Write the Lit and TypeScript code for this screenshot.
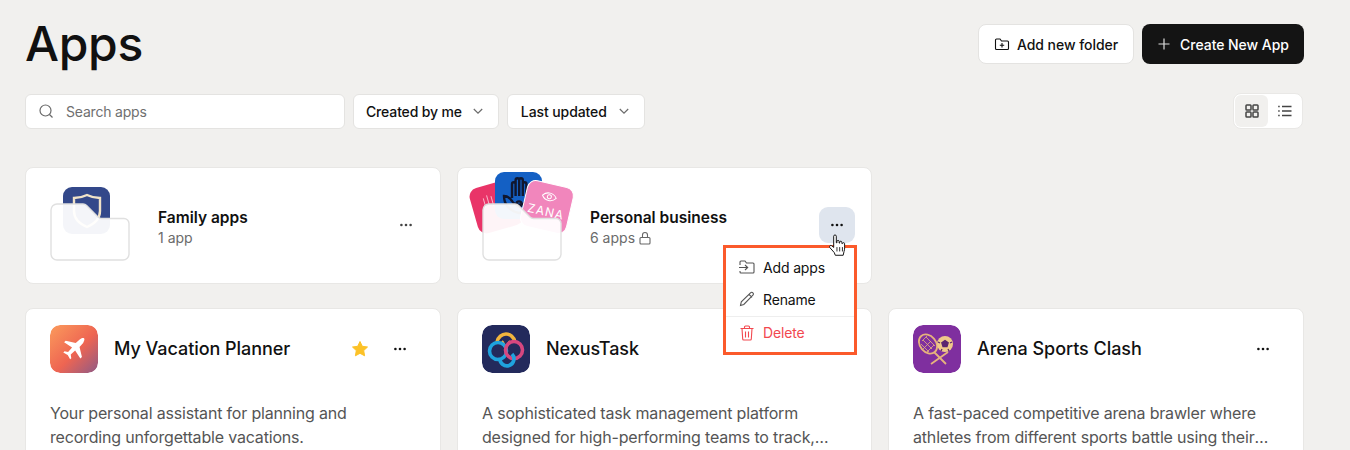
import { LitElement, html, css } from "lit";
import { customElement } from "lit/decorators.js";

const dots = html`<svg width="16" height="16" viewBox="0 0 16 16" fill="currentColor"><circle cx="3.4" cy="8" r="1.3"/><circle cx="8" cy="8" r="1.3"/><circle cx="12.6" cy="8" r="1.3"/></svg>`;
const chevron = html`<svg width="14" height="14" viewBox="0 0 14 14" fill="none" stroke="#6b6b6b" stroke-width="1.2"><path d="M2.800 5l4.200 4.200L11.200 5"/></svg>`;

@customElement("app-root")
export class AppRoot extends LitElement {
  static styles = css`
    :host { display: block; width: 1350px; height: 450px; overflow: hidden; background: #f1f0ee; font-family: Inter, "Liberation Sans", sans-serif; color: #111; }
    * { box-sizing: border-box; }
    .page { padding: 24px 46px 0 25px; }
    .head { display: flex; justify-content: space-between; align-items: flex-start; height: 69px; }
    h1 { margin: -2px 0 0; font-size: 48px; line-height: 44px; font-weight: 500; letter-spacing: -0.3px; }
    .actions { display: flex; gap: 8px; }
    .btn { display: flex; align-items: center; height: 40px; border-radius: 8px; font-size: 14px; font-weight: 500; white-space: nowrap; letter-spacing: -0.05px; justify-content: center; }
    .btn.light { background: #fff; border: 1px solid #e4e3e1; width: 156px; gap: 7px; }
    .btn.dark { background: #141414; color: #fff; width: 162px; gap: 9px; }
    .toolbar { display: flex; gap: 8px; align-items: center; height: 36px; }
    .search { width: 320px; height: 35px; background: #fff; border: 1px solid #e4e3e1; border-radius: 6px; display: flex; align-items: center; gap: 12px; padding-left: 12px; font-size: 14px; letter-spacing: -0.2px; color: #6f6f6f; }
    .drop { height: 35px; background: #fff; border: 1px solid #e4e3e1; border-radius: 6px; display: flex; align-items: center; gap: 9px; padding: 0 13px 0 12px; font-size: 14px; font-weight: 500; letter-spacing: -0.15px; white-space: nowrap; }
    .drop.last { width: 138px; padding-left: 13px; gap: 10px; letter-spacing: -0.1px; }
    .views { margin: 0 1px 0 auto; width: 70px; height: 36px; background: #fff; border: 1px solid #e9e8e6; border-radius: 8px; display: flex; align-items: center; padding: 1px; }
    .view { width: 33px; height: 32px; border-radius: 6px; display: flex; align-items: center; justify-content: center; }
    .view.on { background: #f1f0ee; }
    .grid { display: grid; grid-template-columns: 416px 415px 416px; column-gap: 16px; row-gap: 24px; margin-top: 38px; }
    .card { background: #fff; border: 1px solid #e8e7e5; border-radius: 8px; position: relative; }
    .folder { height: 117px; display: flex; align-items: center; padding: 0 16px 0 132px; }
    .thumb { position: absolute; left: 0; top: 0; width: 130px; height: 115px; }
    .tile { position: absolute; border-radius: 9px; overflow: hidden; display: flex; align-items: center; justify-content: center; }
    .tile-family { left: 37px; top: 19px; width: 47px; height: 47px; background: #33488a; }
    .tile-red { left: 15px; top: 15px; width: 47px; height: 47px; background: #e93468; transform: rotate(-16deg); justify-content: flex-start; align-items: flex-start; padding: 8px 0 0 10px; }
    .tile-blue { left: 37px; top: 4px; width: 47px; height: 47px; background: #1460c4; }
    .tile-pink { left: 65px; top: 15px; width: 48px; height: 48px; background: #f186bc; transform: rotate(13deg); border: 1.5px solid #fff; color: #fff; flex-direction: column; justify-content: flex-start; padding-top: 7px; gap: 2px; font-size: 12px; letter-spacing: 1px; }
    .pocket { position: absolute; left: 24px; top: 0; width: 81px; height: 93px; }
    .f-text { flex: 1; margin-top: 5px; }
    .f-name { font-size: 15.5px; line-height: 20px; font-weight: 600; }
    .f-sub { font-size: 14px; line-height: 20px; color: #6b6b6b; display: flex; align-items: center; gap: 3px; }
    .more { width: 36px; height: 36px; margin-top: -2px; border-radius: 9px; display: flex; align-items: center; justify-content: center; color: #444; flex: none; }
    .more.active { background: #dfe5ee; color: #111; }
    .app { height: 200px; padding: 16px 24px; }
    .app-head { display: flex; align-items: center; height: 48px; }
    .logo { width: 48px; height: 48px; border-radius: 10px; flex: none; display: block; }
    .app-name { margin-left: 16px; font-size: 18px; font-weight: 500; letter-spacing: -0.05px; flex: 1; white-space: nowrap; margin-top: -1px; }
    .star { margin-right: 19px; display: block; }
    .app-more { width: 24px; height: 24px; margin-right: 4px; display: flex; align-items: center; justify-content: center; color: #111; }
    .desc { margin: 28px 0 0; font-size: 16px; line-height: 24px; letter-spacing: -0.18px; color: #555; display: -webkit-box; -webkit-line-clamp: 2; -webkit-box-orient: vertical; overflow: hidden; }
    .menu { position: absolute; left: 265px; top: 77px; width: 134px; height: 110px; background: #fff; border: 3px solid #fb5a2b; z-index: 3; padding-top: 3px; }
    .mi { display: flex; align-items: center; gap: 7px; height: 32px; padding-left: 12px; font-size: 14px; letter-spacing: -0.15px; }
    .mi.del { color: #f2484f; border-top: 1px solid #eee; margin-top: 1px; }
    .cursor { position: absolute; left: 370px; top: 66px; z-index: 4; display: block; }
  `;

  private folderShape() {
    return html`<svg class="pocket" viewBox="0 0 81 93"><path d="M1 42a6 6 0 0 1 6-6h26a5 5 0 0 1 3.600 1.500L48 49a5 5 0 0 0 3.500 1.500H74a5 5 0 0 1 5 5V86a6 6 0 0 1-6 6H7a6 6 0 0 1-6-6z" fill="#fff" fill-opacity=".95" stroke="#e0e0e0" stroke-width="1.400"/></svg>`;
  }

  render() {
    return html`<div class="page">
      <div class="head">
        <h1>Apps</h1>
        <div class="actions">
          <div class="btn light">
            <svg width="16" height="16" viewBox="0 0 16 16" fill="none" stroke="#111" stroke-width="1.100"><path d="M1.500 4a1 1 0 0 1 1-1h3.500l1.500 2h6a1 1 0 0 1 1 1v6.500a1 1 0 0 1-1 1h-11a1 1 0 0 1-1-1z"/><path d="M8 7v4.500M5.800 9.200h4.400"/></svg>
            Add new folder
          </div>
          <div class="btn dark">
            <svg width="14" height="14" viewBox="0 0 14 14" fill="none" stroke="#ddd" stroke-width="1.200"><path d="M7 1.500v11M1.500 7h11"/></svg>
            Create New App
          </div>
        </div>
      </div>
      <div class="toolbar">
        <div class="search">
          <svg width="16" height="16" viewBox="0 0 16 16" fill="none" stroke="#6a6a6a" stroke-width="1.200"><circle cx="7.500" cy="7.500" r="5.500"/><path d="M11.500 11.500l3 3"/></svg>
          Search apps
        </div>
        <div class="drop">Created by me ${chevron}</div>
        <div class="drop last">Last updated ${chevron}</div>
        <div class="views">
          <div class="view on"><svg width="16" height="16" viewBox="0 0 16 16" fill="none" stroke="#444" stroke-width="1.500"><rect x="2" y="2" width="5" height="5" rx=".8"/><rect x="9" y="2" width="5" height="5" rx=".8"/><rect x="2" y="9" width="5" height="5" rx=".8"/><rect x="9" y="9" width="5" height="5" rx=".8"/></svg></div>
          <div class="view"><svg width="16" height="16" viewBox="0 0 16 16" fill="none" stroke="#444" stroke-width="1.500"><path d="M5 3.500h9.500M5 8h9.500M5 12.500h9.500M1.200 3.500h1.500M1.200 8h1.500M1.200 12.500h1.500"/></svg></div>
        </div>
      </div>
      <div class="grid">
        <div class="card folder">
          <div class="thumb">
            <div class="tile tile-family">
              <svg width="30" height="38" viewBox="0 0 30 38" fill="none" stroke="#f1e3c8" stroke-width="2.400"><path d="M2 6c5 0 9-1 13-3 4 2 8 3 13 3v13c0 8-6 13-13 16C8 32 2 27 2 19z"/></svg>
            </div>
            ${this.folderShape()}
          </div>
          <div class="f-text"><div class="f-name">Family apps</div><div class="f-sub">1 app</div></div>
          <div class="more">${dots}</div>
        </div>
        <div class="card folder">
          <div class="thumb">
            <div class="tile tile-red">
              <svg width="14" height="16" viewBox="0 0 14 16" fill="none" stroke="#f7b5c8"><path d="M3 14V4M7 12V2M11 14V4"/></svg>
            </div>
            <div class="tile tile-blue">
              <svg width="34" height="42" viewBox="0 0 34 42" fill="none" stroke="#10172f" stroke-width="2.400"><path d="M10 23V9a1.800 1.800 0 0 1 3.600 0M13.600 21V5a1.800 1.800 0 0 1 3.600 0v16M20.800 21V5a1.800 1.800 0 0 0-3.600 0M20.800 9a1.800 1.800 0 0 1 3.600 0v14M2 21c4 0 6 2 8 5 3 5 11 5 14 0 2-3 4-5 8-5 0 8-5 15-15 17C7 36 2 29 2 21z"/><circle cx="17" cy="29" r="2.600"/></svg>
            </div>
            <div class="tile tile-pink">
              <svg width="16" height="11" viewBox="0 0 16 11" fill="none" stroke="#fff"><path d="M1 5.500c3.500-5 10.500-5 14 0-3.500 5-10.500 5-14 0z"/><circle cx="8" cy="5.500" r="2"/></svg>
              ZANA
            </div>
            ${this.folderShape()}
          </div>
          <div class="f-text"><div class="f-name">Personal business</div><div class="f-sub">6 apps
            <svg width="14" height="14" viewBox="0 0 14 14" fill="none" stroke="#666" stroke-width="1.100"><rect x="2" y="6.500" width="10" height="6.500" rx="1"/><path d="M4.500 6.500V4a2.500 2.500 0 0 1 5 0v2.500"/></svg></div></div>
          <div class="more active">${dots}</div>
          <svg class="cursor" width="19" height="24" viewBox="0 0 17 22"><path d="M5 2c0-1.500 2.400-1.500 2.400 0v6l.6.100V6.800c0-1.300 2-1.300 2 0v1.500l.5.100V7.500c0-1.200 2-1.200 2 0v1.200l.5.100c0-1.100 2-1.100 2 0 0 3 .3 5.200-.5 7.200l-.8 3.500H6.500L5.500 17 1.500 12.500c-.9-1.300.5-2.700 1.800-1.700L5 12.300z" fill="#fff" stroke="#111" stroke-width=".9" stroke-linejoin="round"/><path d="M8 12v4M10.500 12v4M13 12v4" stroke="#111" stroke-width=".8"/></svg>
          <div class="menu">
            <div class="mi">
              <svg width="18" height="16" viewBox="0 0 18 16" fill="none" stroke="#555" stroke-width="1.100"><path d="M2 6V3a1 1 0 0 1 1-1h4l1.500 2H15a1 1 0 0 1 1 1v8a1 1 0 0 1-1 1H3a1 1 0 0 1-1-1v-1"/><path d="M1 8.500h8.500M7 6l2.700 2.500L7 11"/></svg>
              Add apps
            </div>
            <div class="mi">
              <svg width="18" height="16" viewBox="0 0 18 16" fill="none" stroke="#555" stroke-width="1.100"><path d="M2.500 14.500l.8-3.600L12.500 1.800c.7-.7 1.700-.7 2.400 0 .7.700.7 1.700 0 2.400L5.800 13.500zM11 3.300l3 3"/></svg>
              Rename
            </div>
            <div class="mi del">
              <svg width="18" height="16" viewBox="0 0 18 16" fill="none" stroke="#f2484f" stroke-width="1.100"><path d="M2.500 3.500h13M6.500 3.500V2a1 1 0 0 1 1-1h3a1 1 0 0 1 1 1v1.500M4 3.500l.7 10.500a1 1 0 0 0 1 1h6.600a1 1 0 0 0 1-1L14 3.500M7.500 6.500v6M10.500 6.500v6"/></svg>
              Delete
            </div>
          </div>
        </div>
        <div></div>
        <div class="card app">
          <div class="app-head">
            <svg class="logo" viewBox="0 0 48 48">
              <defs><linearGradient id="g" x1="0" y1="0" x2="1" y2="1"><stop offset="0" stop-color="#fb9b5c"/><stop offset=".55" stop-color="#ee6552"/><stop offset="1" stop-color="#8f5a86"/></linearGradient></defs>
              <rect width="48" height="48" rx="10" fill="url(#g)"/>
              <path transform="translate(4.500 4.500) scale(.8)" d="M37 11c-1.500-1-4 0-5.500 1.500L26.500 17 14 14l-2 2 10 6.500-5 5.500-4.500-.7-1.500 1.500 5.500 3 3 5.500 1.500-1.500-.7-4.500 5.500-5 6.500 10 2-2-3-12.500 4.500-5C37 14.500 38 12.500 37 11z" fill="#fff"/>
            </svg>
            <div class="app-name">My Vacation Planner</div>
            <svg class="star" width="18" height="18" viewBox="0 0 18 18"><path d="M9 1.500l2.300 4.800 5.200.7-3.800 3.600.9 5.200L9 13.300l-4.600 2.500.9-5.200L1.500 7l5.200-.7z" fill="#fcc227" stroke="#fcc227" stroke-linejoin="round"/></svg>
            <div class="app-more">${dots}</div>
          </div>
          <p class="desc">Your personal assistant for planning and recording unforgettable vacations.</p>
        </div>
        <div class="card app">
          <div class="app-head">
            <svg class="logo" viewBox="0 0 48 48" fill="none" stroke-width="3.600">
              <rect width="48" height="48" rx="10" fill="#232a5c"/>
              <path d="M15 17c1-5 5-8 9-8s8 3 9 8" stroke="#f1b53d"/>
              <path d="M20 16c2 2 3 5 4 8 1-3 2-6 4-8" stroke="#f1b53d" stroke-width="2"/>
              <circle cx="16" cy="26" r="8.500" stroke="#1fa3de"/>
              <circle cx="32" cy="25" r="8.500" stroke="#d6477f"/>
              <path d="M18 33a7 7 0 1 0 12-4" stroke="#1fa3de"/>
            </svg>
            <div class="app-name">NexusTask</div>
          </div>
          <p class="desc">A sophisticated task management platform designed for high-performing teams to track, manage and deliver their work.</p>
        </div>
        <div class="card app">
          <div class="app-head">
            <svg class="logo" viewBox="0 0 48 48" fill="none" stroke="#e6b37c">
              <rect width="48" height="48" rx="10" fill="#7f2f9f" stroke="none"/>
              <ellipse cx="15" cy="19" rx="8" ry="10.500" transform="rotate(-40 15 19)" stroke-width="1.800"/>
              <path d="M10 15l9 9M13 12l9 9M8 19l8 8M10 24l8-8M14 27l7-7M14 11l-5 5" stroke-width=".8"/>
              <path d="M21 27l12 12M35 27L18 39" stroke-width="1.800"/>
              <circle cx="32" cy="19" r="8" fill="#efc98a" stroke="none"/>
              <path d="M32 15.500l3.200 2.300-1.200 3.800h-4l-1.200-3.800zM25 17l2 1M39 17l-2 1M28 26l1-2M36 26l-1-2" fill="#5a2570" stroke="#5a2570" stroke-width="1.300"/>
            </svg>
            <div class="app-name">Arena Sports Clash</div>
            <div class="app-more">${dots}</div>
          </div>
          <p class="desc">A fast-paced competitive arena brawler where athletes from different sports battle using their signature moves and gear.</p>
        </div>
      </div>
    </div>`;
  }
}
